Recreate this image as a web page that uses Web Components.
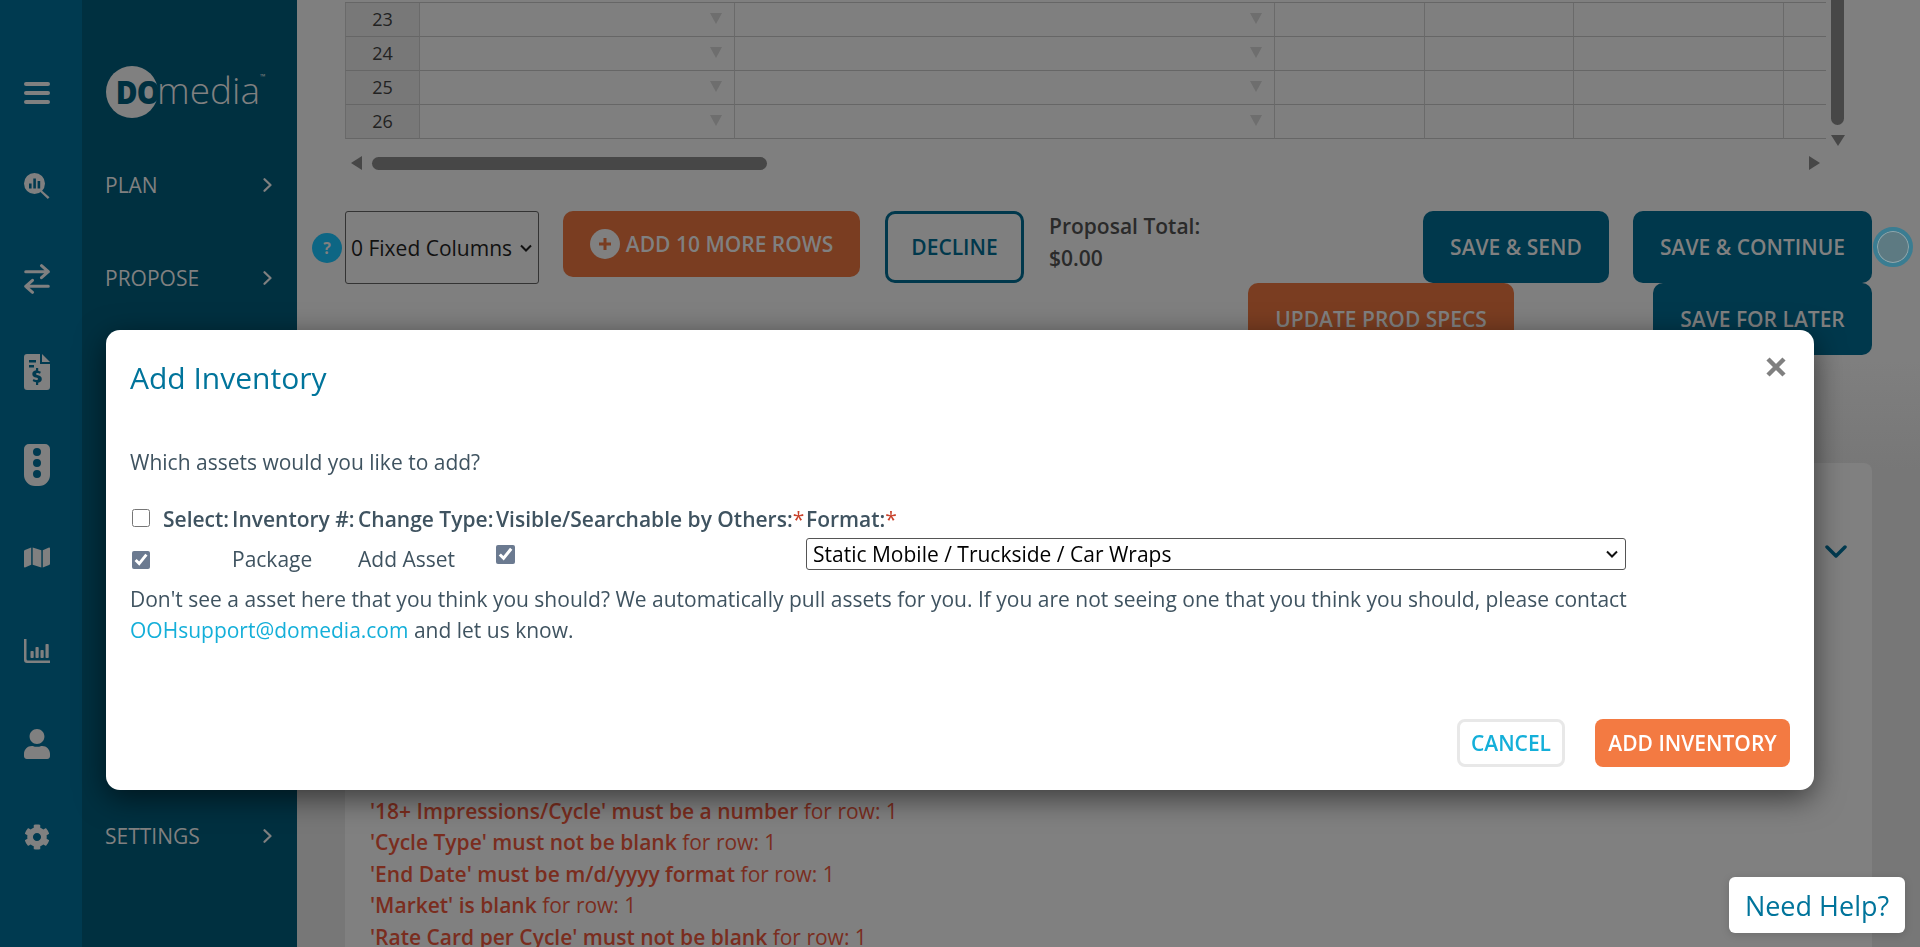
<!DOCTYPE html>
<html>
<head>
<meta charset="utf-8">
<title>Add Inventory</title>
<style>
  html, body { margin: 0; height: 947px; overflow: hidden; background: #7e7e7e; font-family: "Open Sans", sans-serif; }
</style>
</head>
<body>
<do-app></do-app>

<script>
// small helper, every component is just a template + a class
function define(tag, html, setup) {
  var t = document.createElement("template");
  t.innerHTML = html;
  customElements.define(tag, class extends HTMLElement {
    constructor() {
      super();
      this.attachShadow({mode: "open"});
      this.shadowRoot.appendChild(t.content.cloneNode(true));
    }
    connectedCallback() { if (setup) setup(this); }
  });
}

var CHEVRON = "url(\"data:image/svg+xml,%3Csvg xmlns='http://www.w3.org/2000/svg' width='12' height='8'%3E%3Cpath d='M1 1.5l5 5 5-5' fill='none' stroke='%23111' stroke-width='2'/%3E%3C/svg%3E\")";

// ---- side rail icons
define("do-rail", `
<style>
  :host { display: flex; flex-direction: column; width: 58px; padding: 46px 0 0 24px; background: #003a50; flex: none; height: 901px; }
  div { height: 93px; width: 26px; display: flex; align-items: center; flex: none; }
  svg { display: block; width: 26px; fill: #808080; }
</style>
<div><svg style="height:22px" viewBox="0 0 26 22"><rect y="0" width="26" height="4" rx="2"/><rect y="9" width="26" height="4" rx="2"/><rect y="18" width="26" height="4" rx="2"/></svg></div>
<div><svg style="height:26px" viewBox="0 0 26 26"><path fill-rule="evenodd" d="M10.5 0a10.5 10.5 0 1 1 0 21a10.5 10.5 0 0 1 0-21zM5 10.5v5h2.6v-5zM9.3 5.5v10h2.6v-10zM13.6 8v7.5h2.6V8z"/><path d="M17.6 17.2l7.9 7.1-1.7 1.7-7.6-7.2z"/></svg></div>
<div><svg style="height:30px" viewBox="0 0 26 30"><path d="M1.7 7.7H24.3M17.5 1.7l6.8 6-6.8 6M24.3 22.3H1.7M8.5 16.3l-6.8 6 6.8 6" stroke="#808080" stroke-width="3" stroke-linecap="round" stroke-linejoin="round" fill="none"/></svg></div>
<div><svg style="height:36px" viewBox="0 0 26 36"><path fill-rule="evenodd" d="M3 0h13v10h10v23a3 3 0 0 1-3 3H3a3 3 0 0 1-3-3V3a3 3 0 0 1 3-3zM5 6v2.5h7V6zM5 11v2.5h5V11zM12 14v2.2c-2.2.3-3.7 1.7-3.7 3.7 0 2.2 1.7 3.1 3.7 3.7 1.5.4 2 .8 2 1.3 0 .6-.6 1-1.6 1-1 0-2-.3-2.8-.9l-1 2c.9.7 2 1.1 3.4 1.2V31h2.2v-2.3c2.2-.4 3.6-1.8 3.6-3.8 0-2.2-1.6-3.1-3.7-3.7-1.5-.4-2-.8-2-1.3 0-.6.5-.9 1.4-.9 1 0 1.8.3 2.5.7l.9-2c-.8-.5-1.7-.8-2.7-1V14z"/><path d="M18 0l8 8h-8z"/></svg></div>
<div><svg style="height:42px" viewBox="0 0 26 42"><path fill-rule="evenodd" d="M5 0h16a5 5 0 0 1 5 5v26a11 11 0 0 1-11 11h-4A11 11 0 0 1 0 31V5a5 5 0 0 1 5-5zM13 4a4 4 0 1 0 0 8a4 4 0 0 0 0-8zM13 15a4 4 0 1 0 0 8a4 4 0 0 0 0-8zM13 26a4 4 0 1 0 0 8a4 4 0 0 0 0-8z"/></svg></div>
<div><svg style="height:23px" viewBox="0 0 576 512" preserveAspectRatio="none"><path d="M0 117.66v346.32c0 11.32 11.43 19.06 21.94 14.86L160 416V32L20.12 87.95A32.006 32.006 0 0 0 0 117.66zM192 416l192 64V96L192 32v384zM554.06 33.16L416 96v384l139.88-55.95A31.996 31.996 0 0 0 576 394.34V48.02c0-11.32-11.43-19.06-21.94-14.86z"/></svg></div>
<div><svg style="height:24px" viewBox="0 0 26 24"><path d="M0 0h2.5v20a1.5 1.5 0 0 0 1.5 1.5h22V24H3a3 3 0 0 1-3-3z"/><rect x="6.5" y="12" width="3.2" height="7" rx=".8"/><rect x="11.5" y="8" width="3.2" height="11" rx=".8"/><rect x="16.5" y="11" width="3.2" height="8" rx=".8"/><rect x="21.5" y="5" width="3.2" height="14" rx=".8"/></svg></div>
<div><svg style="height:30px" viewBox="0 0 448 512" preserveAspectRatio="none"><path d="M224 256c70.7 0 128-57.3 128-128S294.7 0 224 0 96 57.3 96 128s57.3 128 128 128zm89.6 32h-16.7c-22.2 10.2-46.9 16-72.9 16s-50.6-5.8-72.9-16h-16.7C60.2 288 0 348.2 0 422.4V464c0 26.5 21.5 48 48 48h352c26.5 0 48-21.5 48-48v-41.6c0-74.2-60.2-134.4-134.4-134.4z"/></svg></div>
<div><svg style="height:26px" viewBox="0 0 512 512"><path d="M487.4 315.7l-42.6-24.6c4.3-23.2 4.3-47 0-70.2l42.6-24.6c4.9-2.8 7.1-8.6 5.5-14-11.1-35.6-30-67.8-54.7-94.6-3.8-4.1-10-5.1-14.8-2.3L380.8 110c-17.9-15.4-38.5-27.3-60.8-35.1V25.8c0-5.6-3.9-10.5-9.4-11.7-36.7-8.2-74.3-7.8-109.2 0-5.5 1.2-9.4 6.1-9.4 11.7V75c-22.2 7.9-42.8 19.8-60.8 35.1L88.7 85.5c-4.9-2.8-11-1.9-14.8 2.3-24.7 26.7-43.6 58.9-54.7 94.6-1.7 5.4.6 11.2 5.5 14L67.3 221c-4.3 23.2-4.3 47 0 70.2l-42.6 24.6c-4.9 2.8-7.1 8.6-5.5 14 11.1 35.6 30 67.8 54.7 94.6 3.8 4.1 10 5.1 14.8 2.3l42.6-24.6c17.9 15.4 38.5 27.3 60.8 35.1v49.2c0 5.6 3.9 10.5 9.4 11.7 36.7 8.2 74.3 7.8 109.2 0 5.5-1.2 9.4-6.1 9.4-11.7v-49.2c22.2-7.9 42.8-19.8 60.8-35.1l42.6 24.6c4.9 2.8 11 1.9 14.8-2.3 24.7-26.7 43.6-58.9 54.7-94.6 1.5-5.5-.7-11.3-5.6-14.1zM256 336c-44.1 0-80-35.9-80-80s35.9-80 80-80 80 35.9 80 80-35.9 80-80 80z"/></svg></div>
`);

// ---- logo
define("do-logo", `
<style>
  :host { display: flex; align-items: center; height: 92px; color: #808080; }
  .ball { width: 52px; height: 52px; border-radius: 50%; background: #808080; flex: none; display: flex; align-items: center; justify-content: flex-end; }
  .do { font-size: 31px; font-weight: 800; color: #003040; letter-spacing: -1px; transform: scaleX(.96); transform-origin: right center; line-height: 52px; margin-right: -1px; }
  .media { font-size: 37px; font-weight: 300; line-height: 52px; margin-left: -1px; position: relative; top: -2px; }
  sup { font-size: 7px; line-height: 10px; position: relative; top: -15px; }
</style>
<div class="ball"><span class="do">DO</span></div><span class="media">media</span><sup>™</sup>
`);

// ---- nav entry
define("do-nav-item", `
<style>
  :host { display: flex; align-items: center; height: 93px; color: #808080; font-size: 21px; }
  span { flex: 1; }
  svg { width: 9px; height: 14px; margin-right: 25px; fill: none; stroke: #808080; stroke-width: 2.2; stroke-linecap: round; stroke-linejoin: round; }
</style>
<span><slot></slot></span>
<svg viewBox="0 0 9 14"><path d="M1.5 1.2L7.5 7l-6 5.8"/></svg>
`);

define("do-nav", `
<style>
  :host { display: block; width: 192px; padding-left: 23px; background: #003040; flex: none; height: 947px; }
  .gap { height: 46px; }
  .hidden { height: 465px; }
  do-logo { margin-left: 1px; }
</style>
<div class="gap"></div>
<do-logo></do-logo>
<do-nav-item>PLAN</do-nav-item>
<do-nav-item>PROPOSE</do-nav-item>
<div class="hidden"></div>
<do-nav-item>SETTINGS</do-nav-item>
`);

// ---- sheet, rows are generated
define("do-sheet", `
<style>
  :host { display: grid; grid-template-columns: 1481px 24px; width: 1505px; height: 173px; margin-left: 48px; font-size: 18px; color: #222; }
  .rows { margin-top: 2px; border-top: 1px solid #666; }
  .row { display: grid; grid-template-columns: 75px 315px 540px 150px 149px 210px 42px; height: 34px; }
  .row > div { box-sizing: border-box; border-right: 1px solid #6a6a6a; border-bottom: 1px solid #666; }
  .row > div:last-child { border-right: 0; }
  .num { background: #787878; border-left: 1px solid #6a6a6a; display: flex; align-items: center; justify-content: center; padding-bottom: 1px; }
  .dd { display: flex; align-items: center; justify-content: flex-end; padding: 0 12px 2px 0; }
  .dd i { width: 0; height: 0; border-left: 6px solid transparent; border-right: 6px solid transparent; border-top: 11px solid #6e6e6e; }
  .hbar { display: flex; align-items: center; height: 14px; margin-top: 17px; padding: 0 6px; }
  .thumb { background: #474747; border-radius: 7px; }
  .l { width: 0; height: 0; border-top: 7px solid transparent; border-bottom: 7px solid transparent; border-right: 11px solid #474747; margin-right: 10px; }
  .r { width: 0; height: 0; border-top: 7px solid transparent; border-bottom: 7px solid transparent; border-left: 11px solid #474747; margin-left: auto; }
  .vbar { padding-left: 5px; }
  .vbar .thumb { width: 13px; height: 125px; border-radius: 0 0 7px 7px; }
  .d { width: 0; height: 0; border-left: 7px solid transparent; border-right: 7px solid transparent; border-top: 11px solid #474747; margin-top: 10px; }
</style>
<div>
  <div class="rows"></div>
  <div class="hbar"><span class="l"></span><span class="thumb" style="width:395px;height:13px"></span><span class="r"></span></div>
</div>
<div class="vbar"><div class="thumb"></div><div class="d"></div></div>
`, function (el) {
  var rows = el.shadowRoot.querySelector(".rows");
  [23, 24, 25, 26].forEach(function (n) {
    var r = document.createElement("div");
    r.className = "row";
    r.innerHTML = '<div class="num">' + n + '</div><div class="dd"><i></i></div><div class="dd"><i></i></div><div></div><div></div><div></div><div></div>';
    rows.appendChild(r);
  });
});

// ---- buttons
define("do-btn", `
<style>
  :host { display: inline-flex; align-items: center; justify-content: center; box-sizing: border-box; border-radius: 10px; font-size: 21px; font-weight: 600; color: #808080; background: #00384c; flex: none; white-space: nowrap; }
  :host([tone=orange]) { background: #7a3d21; }
  :host([tone=outline]) { background: transparent; border: 3px solid #00384c; color: #00384c; }
  :host([tone=hot]) { background: #f37a42; color: #fff; border-radius: 8px; }
  :host([tone=ghost]) { background: #fff; border: 3px solid #e8e8e8; color: #14afd9; border-radius: 8px; }
</style>
<slot></slot>
`);

define("do-toolbar", `
<style>
  :host { display: block; margin: 38px 0 0 15px; width: 1601px; }
  .one { display: flex; align-items: flex-start; height: 72px; }
  .two { display: flex; justify-content: flex-end; padding-right: 41px; height: 72px; }
  .two do-btn:first-child { margin-right: 139px; }
  .q { width: 30px; height: 30px; margin: 22px 3px 0 0; border-radius: 50%; background: #0d6684; color: #808080; font-size: 16px; font-weight: 700; display: flex; align-items: center; justify-content: center; flex: none; }
  select { appearance: none; width: 194px; height: 73px; box-sizing: border-box; flex: none; font: 21px "Open Sans", sans-serif; color: #111; border: 1px solid #333; border-radius: 3px; padding: 0 0 0 5px; margin: 0 24px 0 0; background: ${CHEVRON} no-repeat right 6px center; }
  .plus { width: 30px; height: 30px; border-radius: 50%; background: #808080; display: flex; align-items: center; justify-content: center; margin-right: 6px; }
  .total { flex: 1; margin-left: 25px; font-size: 21px; font-weight: 600; line-height: 32px; color: #2a2a2a; margin-top: -1px; }
  .ring { width: 32px; height: 32px; border-radius: 50%; border: 4px solid #3a7d92; background: #5d7a82; flex: none; margin: 16px 0 0 1px; box-shadow: inset 0 0 0 1px #8fa8ae; }
</style>
<div class="one">
  <span class="q">?</span>
  <select><option>0 Fixed Columns</option></select>
  <do-btn tone="orange" style="width:297px;height:66px;margin-right:25px">
    <span style="display:flex;align-items:center"><span class="plus"><svg width="14" height="14" viewBox="0 0 14 14"><path d="M7 1v12M1 7h12" stroke="#7a3d21" stroke-width="3"/></svg></span>ADD 10 MORE ROWS</span>
  </do-btn>
  <do-btn tone="outline" style="width:139px;height:72px">DECLINE</do-btn>
  <div class="total">Proposal Total:<br>$0.00</div>
  <do-btn style="width:186px;height:72px;margin-right:24px">SAVE &amp; SEND</do-btn>
  <do-btn style="width:239px;height:72px">SAVE &amp; CONTINUE</do-btn>
  <span class="ring"></span>
</div>
<div class="two">
  <do-btn tone="orange" style="width:266px;height:72px">UPDATE PROD SPECS</do-btn>
  <do-btn style="width:219px;height:72px">SAVE FOR LATER</do-btn>
</div>
`);

// ---- validation panel behind the dialog
define("do-errors", `
<style>
  :host { display: block; margin: 108px 0 0 48px; width: 1527px; box-sizing: border-box; background: #808080; border-radius: 8px 8px 0 0; padding: 0 26px 0 25px; font-size: 21px; line-height: 31.4px; color: #7a2d1e; height: 500px; }
  .top { display: flex; justify-content: flex-end; height: 333px; padding-top: 82px; box-sizing: border-box; }
  svg { width: 22px; height: 13px; fill: none; stroke: #003a50; stroke-width: 3.5; stroke-linecap: round; stroke-linejoin: round; margin-right: -1px; }
  ::slotted(div) { white-space: nowrap; }
</style>
<div class="top"><svg viewBox="0 0 22 13"><path d="M2 2l9 9 9-9"/></svg></div>
<slot></slot>
`);

// ---- dialog
define("do-modal", `
<style>
  :host { position: fixed; left: 106px; top: 330px; width: 1708px; height: 460px; box-sizing: border-box; background: #fff; border-radius: 14px; box-shadow: 0 8px 30px rgba(0,0,0,.55); padding: 27px 24px 23px; display: flex; flex-direction: column; font-size: 21px; line-height: 31px; color: #3f5360; }
  h2 { margin: 0; font-size: 30px; font-weight: 400; line-height: 41px; color: #00749b; }
  svg { position: absolute; right: 28px; top: 27px; width: 20px; height: 20px; }
  .foot { margin-top: auto; display: flex; justify-content: flex-end; }
  .q { margin: 49px 0 0; }
</style>
<svg viewBox="0 0 20 20"><path d="M2 2l16 16M18 2L2 18" stroke="#808080" stroke-width="4.5"/></svg>
<h2><slot name="title"></slot></h2>
<p class="q"><slot name="question"></slot></p>
<slot></slot>
<div class="foot"><slot name="foot"></slot></div>
`);

define("do-asset-table", `
<style>
  :host { display: grid; grid-template-columns: 102px 126px 138px 310px 820px; margin-top: 26px; }
  b { font-weight: 600; white-space: nowrap; }
  b i { font-style: normal; font-weight: 400; color: #c8402a; }
  .sel { display: flex; align-items: center; }
  input { width: 18px; height: 18px; margin: 0 0 0 2px; accent-color: #6b7a90; }
  .sel b { margin-left: 13px; }
  .sel input { position: relative; top: -2px; }
  .cell { height: 49px; display: flex; align-items: center; }
  .vis input { width: 19px; height: 19px; margin: 0; position: relative; top: -5px; }
  select { appearance: none; width: 820px; height: 32px; box-sizing: border-box; font: 21px "Open Sans", sans-serif; color: #000; border: 1px solid #555; border-radius: 3px; padding: 0 0 0 6px; margin-top: -11px; background: #fff ${CHEVRON} no-repeat right 7px center; }
</style>
<div class="sel"><input type="checkbox"><b>Select:</b></div>
<b>Inventory #:</b>
<b>Change Type:</b>
<b>Visible/Searchable by Others:<i>*</i></b>
<b>Format:<i>*</i></b>
<div class="cell"><input type="checkbox" checked></div>
<div class="cell">Package</div>
<div class="cell">Add Asset</div>
<div class="cell vis"><input type="checkbox" checked></div>
<div class="cell"><select><option>Static Mobile / Truckside / Car Wraps</option></select></div>
`);

define("do-help", `
<style>
  :host { position: fixed; left: 1729px; top: 877px; width: 176px; height: 56px; border-radius: 6px; background: #fff; color: #00749b; font-size: 27px; display: flex; align-items: center; justify-content: center; box-shadow: 0 2px 8px rgba(0,0,0,.15); }
</style>
<slot></slot>
`);

// ---- whole page
define("do-app", `
<style>
  :host { display: flex; width: 1920px; height: 947px; overflow: hidden; }
  main { flex: 1; min-width: 0; display: block; background: linear-gradient(#7f7f7f 360px, #777 470px); }
  a { color: #14afd9; text-decoration: none; }
  .cancel { width: 108px; height: 48px; margin-right: 30px; }
  .add { width: 195px; height: 48px; }
  .msg { width: 1510px; }
  b { font-weight: 600; }
</style>
<do-rail></do-rail>
<do-nav></do-nav>
<main>
  <do-sheet></do-sheet>
  <do-toolbar></do-toolbar>
  <do-errors>
    <div><b>'18+ Impressions/Cycle' must be a number</b> for row: 1</div>
    <div><b>'Cycle Type' must not be blank</b> for row: 1</div>
    <div><b>'End Date' must be m/d/yyyy format</b> for row: 1</div>
    <div><b>'Market' is blank</b> for row: 1</div>
    <div><b>'Rate Card per Cycle' must not be blank</b> for row: 1</div>
  </do-errors>
</main>
<do-modal>
  <span slot="title">Add Inventory</span>
  <span slot="question">Which assets would you like to add?</span>
  <do-asset-table></do-asset-table>
  <div class="msg">Don't see a asset here that you think you should? We automatically pull assets for you. If you are not seeing one that you think you should, please contact <a>OOHsupport@domedia.com</a> and let us know.</div>
  <div slot="foot" style="display:flex">
    <do-btn class="cancel" tone="ghost">CANCEL</do-btn>
    <do-btn class="add" tone="hot">ADD INVENTORY</do-btn>
  </div>
</do-modal>
<do-help>Need Help?</do-help>
`);
</script>
</body>
</html>
